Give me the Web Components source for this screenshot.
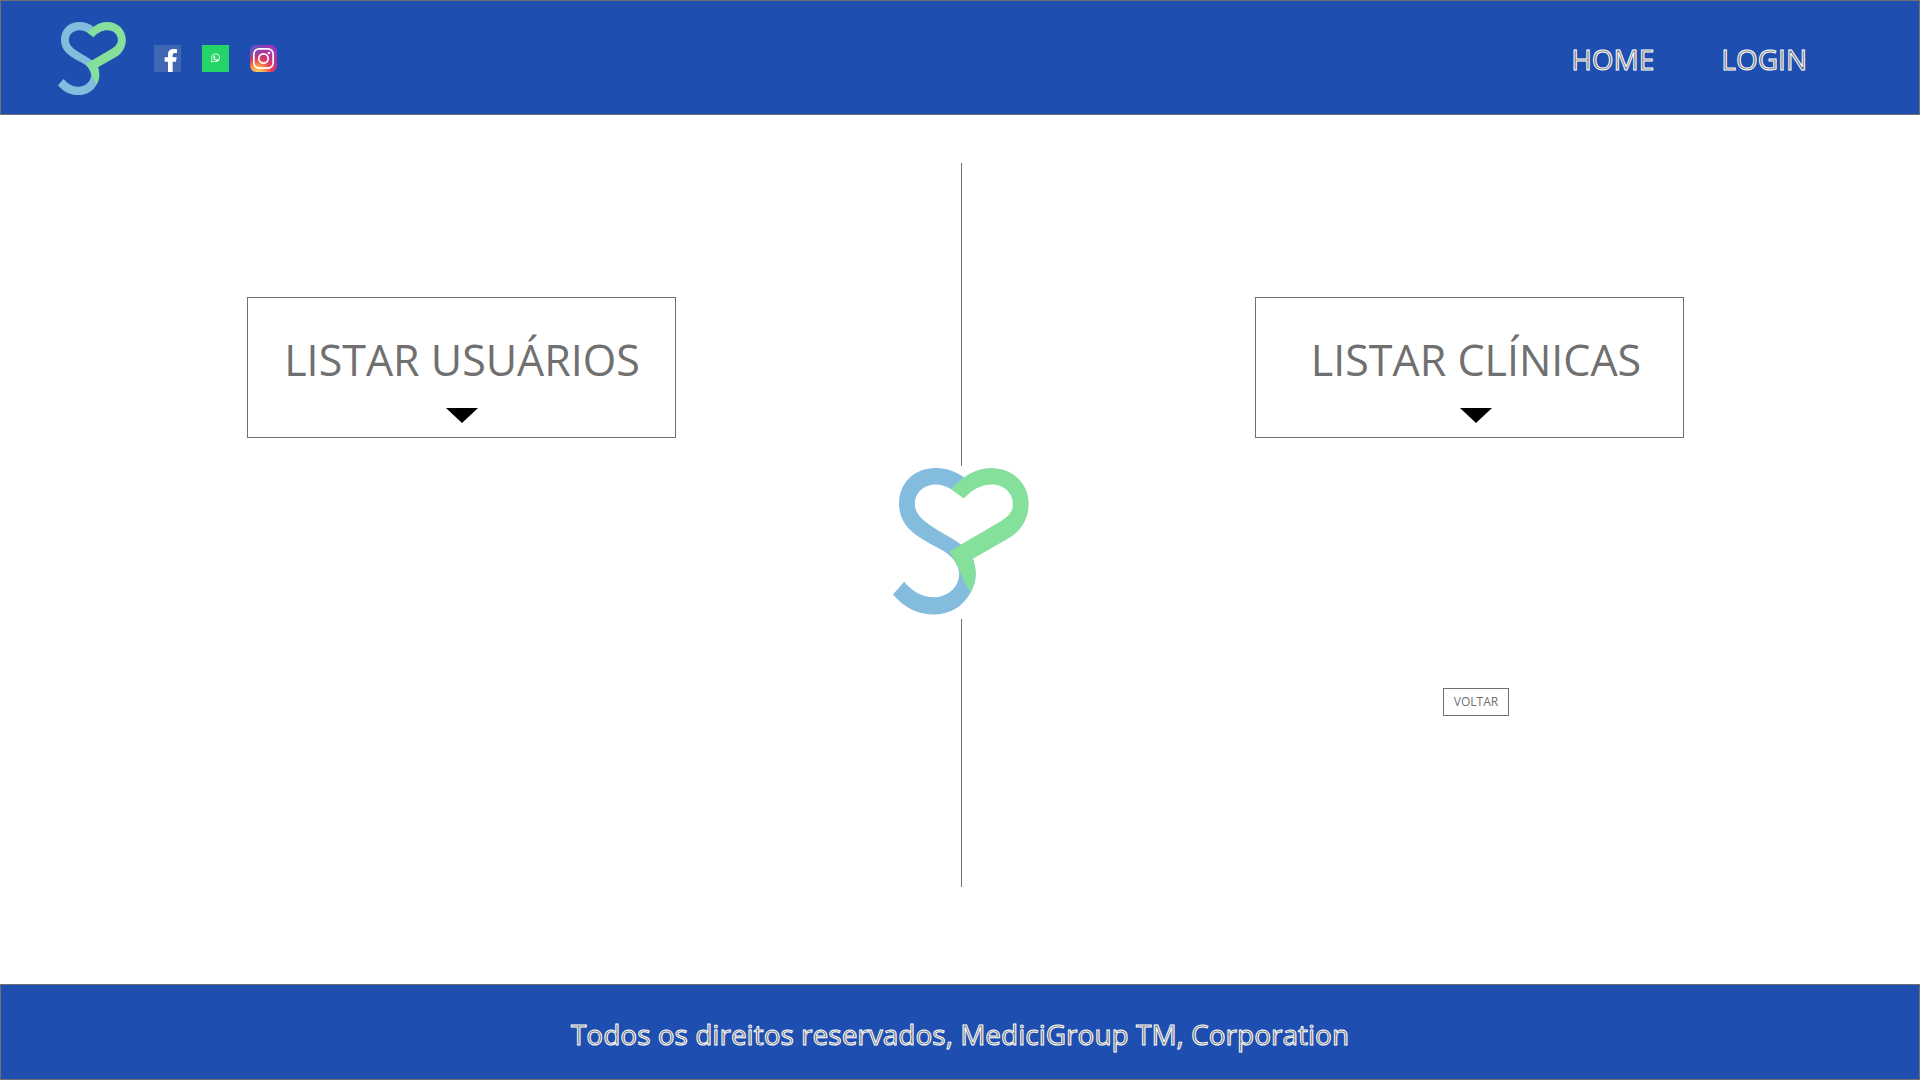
<!DOCTYPE html>
<html lang="pt-BR">
<head>
<meta charset="utf-8">
<title>MediciGroup</title>
<style>
html,body{margin:0;padding:0}
body{background:#fff;font-family:"Open Sans","Noto Sans",sans-serif;color:#707070;--bar:#1e4eaf;--line:#707070;--bar-text:#707070}
</style>
</head>
<body>
<medici-page></medici-page>
<script>
const define = (name, html) => {
  const template = document.createElement('template');
  template.innerHTML = html;
  customElements.define(name, class extends HTMLElement {
    constructor() {
      super();
      this.attachShadow({ mode: 'open' }).append(template.content.cloneNode(true));
    }
  });
};

define('medici-logo', `
<style>:host{display:block;flex:none}svg{display:block;width:100%}</style>
<svg viewBox="100 83 405 437" role="img" aria-label="MediciGroup">
<path fill="#84bcde" d="M100 460L133 422C160 453 190 468 219 468C264 468 297 438 297 397C295 365 272 341 240 324C180 292 118 262 118 190C118 125 165 83 228 83C260 83 290 95 312 111L274 146C258 137 243 132 228 132C190 132 165 158 165 190C165 245 252 272 306 313L338 353C352 390 348 425 332 452C310 495 270 519 219 519C170 519 130 496 100 460Z"/>
<path fill="#84e09a" d="M273 146C285 133 298 121 312 111C335 94 362 83 392 83C456 83 504 128 504 190C504 235 480 271 448 290L338 353C350 388 347 425 332 452C320 440 312 424 305 405C297 384 285 360 268 331L420 242C445 227 457 212 457 190C457 157 430 132 394 132C362 132 335 148 311 174Z"/>
</svg>`);

define('social-links', `
<style>
:host{display:flex;gap:21px}
a{display:block}svg{display:block;width:27px;height:27px}
</style>
<a href="#facebook" aria-label="Facebook"><svg viewBox="0 0 81 81"><path fill="#4267b2" d="M0 0h81v81H0z"/><path fill="#fff" d="M42 81V50H32V37h10V28C42 17 49 12 59 12c5 0 8 0 10 1v11h-6c-6 0-7 3-7 7v6h12l-2 13H56v31z"/></svg></a>
<a href="#whatsapp" aria-label="WhatsApp"><svg viewBox="0 0 81 81"><path fill="#25d366" d="M0 0h81v81H0z"/><path fill="none" stroke="#fff" stroke-width="2.6" d="M28 51l2-7a12 12 0 1 1 5 5z"/><path fill="#fff" d="M36 32c1-1 3-1 3 1l1 3-2 3c1 3 3 4 6 5l2-2 5 2c0 3-3 5-6 4-6-1-10-6-11-10 0-2 0-4 2-6z"/></svg></a>
<a href="#instagram" aria-label="Instagram"><svg viewBox="0 0 81 81"><defs>
<radialGradient id="g" cx=".28" cy="1.05" r="1.05"><stop offset="0" stop-color="#fed576"/><stop offset=".25" stop-color="#f9a04c"/><stop offset=".5" stop-color="#e63e56"/><stop offset=".75" stop-color="#bc3093"/><stop offset="1" stop-color="#9b36b7"/></radialGradient>
<radialGradient id="b" cx="0" cy="0" r=".62"><stop offset="0" stop-color="#4760d3"/><stop offset="1" stop-color="#4760d3" stop-opacity="0"/></radialGradient></defs>
<rect width="81" height="81" rx="19" fill="url(#g)"/><rect width="81" height="81" rx="19" fill="url(#b)"/>
<g fill="none" stroke="#fff" stroke-width="5"><rect x="11.500" y="11.500" width="58" height="58" rx="16"/><circle cx="40.500" cy="40.500" r="14"/></g><circle cx="57" cy="24" r="4" fill="#fff"/></svg></a>`);

define('site-header', `
<style>
:host{display:block}
header{box-sizing:border-box;display:flex;align-items:center;gap:28px;padding:21px 112px 19px 57px;background:var(--bar);border:1px solid var(--line)}
medici-logo{width:68px}
nav{display:flex;gap:67px;margin-left:auto}
a{font-size:28px;line-height:40px;color:var(--bar-text);-webkit-text-stroke:1px #fff;text-decoration:none}
</style>
<header><medici-logo></medici-logo><social-links></social-links>
<nav><a href="#home">HOME</a><a href="#login">LOGIN</a></nav></header>`);

define('list-button', `
<style>
:host{display:block;width:429px;max-width:100%}
button{box-sizing:border-box;width:100%;display:flex;flex-direction:column;align-items:center;gap:17px;padding:31px 0 14px var(--shift,1px);background:#fff;border:1px solid var(--line);color:inherit;font:inherit;font-size:43px;line-height:62px;white-space:nowrap}
svg{display:block;width:32px;height:15px}
</style>
<button type="button" aria-haspopup="listbox"><span><slot></slot></span><svg viewBox="0 0 32 15" aria-hidden="true"><path d="M0 0h32L16 15z"/></svg></button>`);

define('back-button', `
<style>
:host{display:block}
button{box-sizing:border-box;display:block;width:66px;padding:5px 0;background:#fff;border:1px solid var(--line);color:inherit;font:inherit;font-size:12px;line-height:16px}
</style>
<button type="button"><slot></slot></button>`);

define('logo-divider', `
<style>
:host{display:flex;flex-direction:column;align-items:center;padding:48px 0 97px 2px;width:138px;box-sizing:border-box}
medici-logo{width:136px;margin:2px 0 4px}
i{width:1px;background:var(--line)}
.top{flex:303}.bottom{flex:268}
</style>
<i class="top"></i><medici-logo></medici-logo><i class="bottom"></i>`);

define('site-footer', `
<style>
:host{display:block}
footer{padding:29px 16px 25px;background:var(--bar);border:1px solid var(--line);color:var(--bar-text);text-align:center;font-size:28px;line-height:40px;-webkit-text-stroke:1px #fff}
</style>
<footer><slot></slot></footer>`);

define('medici-page', `
<style>
:host{display:flex;flex-direction:column;min-height:100vh}
main{flex:1;display:grid;grid-template-columns:1fr auto 1fr}
section{display:flex;flex-direction:column;align-items:center;gap:250px;padding-top:182px}
.users{padding-left:32px}
.clinics{padding-right:10px;--shift:13px}
back-button{padding-left:13px}
</style>
<site-header></site-header>
<main>
<section class="users"><list-button>LISTAR USUÁRIOS</list-button></section>
<logo-divider></logo-divider>
<section class="clinics"><list-button>LISTAR CLÍNICAS</list-button><back-button>VOLTAR</back-button></section>
</main>
<site-footer>Todos os direitos reservados, MediciGroup TM, Corporation</site-footer>`);
</script>
</body>
</html>
